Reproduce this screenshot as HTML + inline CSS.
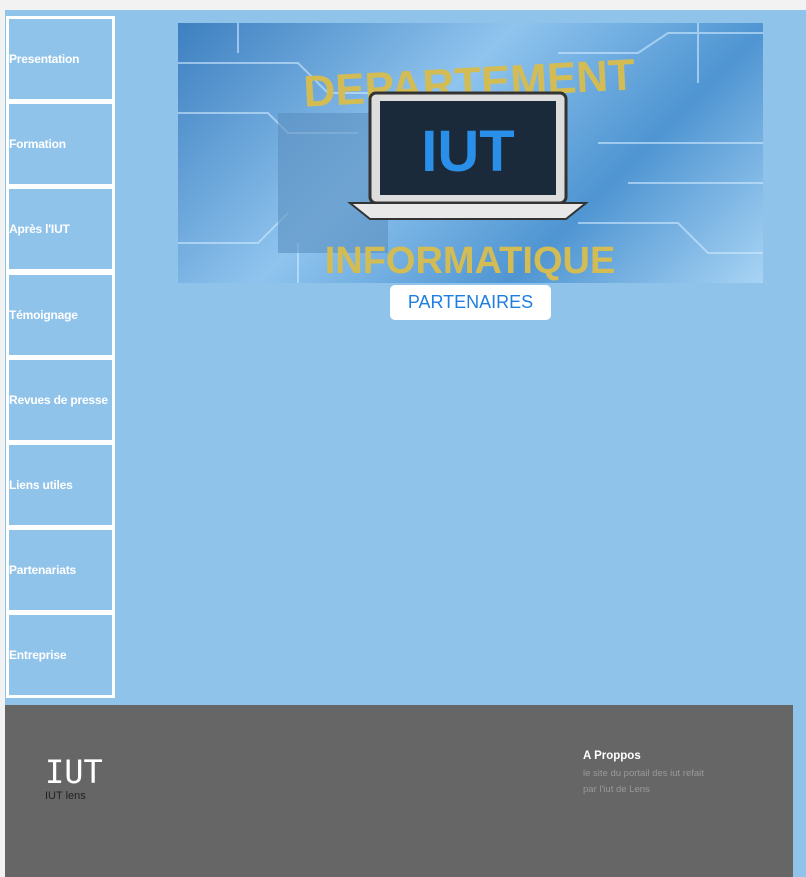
<!DOCTYPE html>
<html><head><style>
body{margin:0;width:806px;height:877px;background:#f2f2f2;position:relative;overflow:hidden;font-family:"Liberation Sans",sans-serif}
.main{position:absolute;left:5px;top:10px;width:801px;height:867px;background:#90c3ea}
.nav{position:absolute;left:6px;width:103px;height:80px;border:3px solid #fff;color:#fff;font-weight:bold;font-size:12px;display:flex;align-items:center;box-sizing:content-box;white-space:nowrap;letter-spacing:-0.2px;overflow:hidden}
.banner{position:absolute;left:178px;top:23px;width:585px;height:260px;background:linear-gradient(135deg,#3d7fc0,#8fc4ee 40%,#4f95d2 70%,#a8d4f4);overflow:hidden}
.btn{position:absolute;left:390px;top:285px;width:161px;height:35px;background:#fff;border-radius:5px;color:#1e7fe0;font-size:18px;text-align:center;line-height:35px}
.foot{position:absolute;left:5px;top:705px;width:788px;height:172px;background:#666}
</style></head><body>
<div class="main"></div>
<div class="nav" style="top:16px">Presentation</div>
<div class="nav" style="top:101px">Formation</div>
<div class="nav" style="top:186px">Après l'IUT</div>
<div class="nav" style="top:272px">Témoignage</div>
<div class="nav" style="top:357px">Revues de presse</div>
<div class="nav" style="top:442px">Liens utiles</div>
<div class="nav" style="top:527px">Partenariats</div>
<div class="nav" style="top:612px">Entreprise</div>
<div class="banner">
<svg width="585" height="260" viewBox="0 0 585 260">
<g stroke="#cfe9ff" stroke-width="2" fill="none" opacity=".6">
<path d="M0 40h120l30 30h60M0 90h90l20 20h70M380 30h80l30-20h95M400 200h100l30 30h55M0 220h80l30-30M420 120h165M450 160h135M60 0v30M520 0v60M120 260v-40"/>
</g>
<rect x="100" y="90" width="110" height="140" fill="#5a8fc0" opacity=".6"/>
<text x="292" y="75" text-anchor="middle" font-size="44" font-weight="bold" fill="#d4bc55" transform="rotate(-3 292 75)">DEPARTEMENT</text>
<rect x="192" y="70" width="196" height="110" rx="6" fill="#ddd" stroke="#333" stroke-width="3"/>
<rect x="202" y="78" width="176" height="94" fill="#1a2a3a"/>
<text x="290" y="148" text-anchor="middle" font-size="58" font-weight="bold" fill="#2a8fe8">IUT</text>
<path d="M172 180h236l-20 16h-196z" fill="#e8e8e8" stroke="#333" stroke-width="2"/>
<text x="292" y="250" text-anchor="middle" font-size="38" font-weight="bold" fill="#d4bc55">INFORMATIQUE</text>
</svg>
</div>
<div class="btn">PARTENAIRES</div>
<div class="foot">
<div style="position:absolute;left:40px;top:48px;color:#fff;font-size:32px;font-family:'DejaVu Sans Mono',monospace">IUT</div>
<div style="position:absolute;left:40px;top:85px;color:#222;font-size:11px">IUT lens</div>
<div style="position:absolute;left:578px;top:45px;color:#fff;font-size:11.5px;font-weight:bold">A Proppos</div>
<div style="position:absolute;left:578px;top:61px;color:#999;font-size:9.5px;line-height:16px">le site du portail des iut refait<br>par l'iut de Lens</div>
</div>
</body></html>
